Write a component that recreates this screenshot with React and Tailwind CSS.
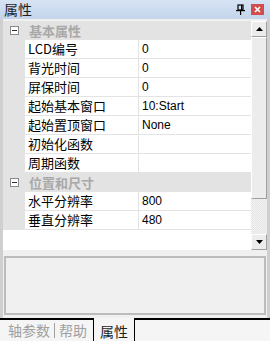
import React from "react";

const font = { fontFamily: '"Noto Sans CJK SC", "Liberation Sans", sans-serif' };

function Cat({ label }) {
  return (
    <div className="flex h-[19px] items-center bg-[#e3e3e3]">
      <div className="flex w-[22px] justify-center">
        <div className="flex h-[9px] w-[9px] items-center justify-center border border-[#8c8c8c] bg-white">
          <div className="h-px w-[5px] bg-[#333]" />
        </div>
      </div>
      <span className="pl-[4px] text-[13px] font-bold text-[#a8a8a8]">{label}</span>
    </div>
  );
}

function Row({ name, value }) {
  return (
    <div className="flex h-[19px] bg-[#e3e3e3]">
      <div className="w-[22px]" />
      <div className="flex w-[113px] items-center border-b border-[#e3e3e3] bg-white pl-[3px] text-[13px] text-black">
        {name}
      </div>
      <div className="w-px bg-[#e3e3e3]" />
      <div
        className="flex flex-1 items-center border-b border-[#e3e3e3] bg-white pl-[3px] text-[12px] text-black"
        style={{ fontFamily: '"Liberation Sans", sans-serif' }}
      >
        {value}
      </div>
    </div>
  );
}

export default function App() {
  return (
    <div className="relative h-[341px] w-[270px] overflow-hidden bg-[#f5f5f5]" style={font}>
      {/* title bar */}
      <div className="flex h-[19px] items-center justify-between bg-gradient-to-b from-[#d6e3f3] to-[#c3d5ec] pl-[4px] pr-[6px]">
        <span className="text-[14px] text-[#1e1e1e]">属性</span>
        <div className="flex items-center gap-[6px]">
          <svg width="9" height="11" viewBox="0 0 9 11">
            <rect x="2" y="1" width="5" height="5" fill="none" stroke="#000" strokeWidth="1.2" />
            <rect x="5" y="1" width="1.2" height="5" fill="#000" />
            <rect x="0" y="6" width="9" height="1.2" fill="#000" />
            <rect x="4" y="7" width="1.2" height="4" fill="#000" />
          </svg>
          <div className="flex h-[11px] w-[13px] items-center justify-center bg-[#d24c4c]">
            <svg width="7" height="7" viewBox="0 0 7 7">
              <path d="M1 1 L6 6 M6 1 L1 6" stroke="#fff" strokeWidth="1.6" />
            </svg>
          </div>
        </div>
      </div>
      {/* body */}
      <div className="flex h-[299px] flex-col border-x-[3px] border-[#cfcfcf] bg-[#f0f0f0] pt-[2px]">
        <div className="flex h-[229px]">
          <div className="flex flex-1 flex-col bg-white">
            <Cat label="基本属性" />
            <Row name="LCD编号" value="0" />
            <Row name="背光时间" value="0" />
            <Row name="屏保时间" value="0" />
            <Row name="起始基本窗口" value="10:Start" />
            <Row name="起始置顶窗口" value="None" />
            <Row name="初始化函数" value="" />
            <Row name="周期函数" value="" />
            <Cat label="位置和尺寸" />
            <Row name="水平分辨率" value="800" />
            <Row name="垂直分辨率" value="480" />
          </div>
          {/* scrollbar */}
          <div className="flex w-[16px] flex-col bg-[#e8e8e8]">
            <div className="flex h-[16px] items-center justify-center border border-b-[#a0a0a0] border-l-white border-r-[#a0a0a0] border-t-white bg-[#ececec]">
              <svg width="7" height="4" viewBox="0 0 7 4"><path d="M0 4 L3.5 0 L7 4 Z" fill="#000" /></svg>
            </div>
            <div className="h-[162px] border border-b-[#a0a0a0] border-l-white border-r-[#a0a0a0] border-t-white bg-[#ececec]" />
            <div className="flex-1 bg-[repeating-conic-gradient(#f4f4f4_0%_25%,#e4e4e4_0%_50%)] bg-[length:2px_2px]" />
            <div className="flex h-[16px] items-center justify-center border border-b-[#a0a0a0] border-l-white border-r-[#a0a0a0] border-t-white bg-[#ececec]">
              <svg width="7" height="4" viewBox="0 0 7 4"><path d="M0 0 L3.5 4 L7 0 Z" fill="#000" /></svg>
            </div>
          </div>
        </div>
        <div className="mx-[1px] mt-[6px] h-[59px] border-2 border-[#bcbcbc] bg-[#f0f0f0]" />
      </div>
      {/* tabs */}
      <div className="flex h-[23px] items-start border-t-2 border-black bg-[#f5f5f5]">
        <div className="flex h-[21px] items-center pl-[8px] text-[14px] text-[#a0a0a0]">
          <span>轴参数</span>
          <div className="mx-[4px] h-[15px] w-px bg-[#a0a0a0]" />
          <span>帮助</span>
        </div>
        <div className="-mt-[2px] ml-[6px] flex h-[30px] items-start border-x border-black bg-[#f5f5f5] px-[6px] pt-[3px] text-[14px] text-[#1e1e1e]">
          属性
        </div>
      </div>
    </div>
  );
}
